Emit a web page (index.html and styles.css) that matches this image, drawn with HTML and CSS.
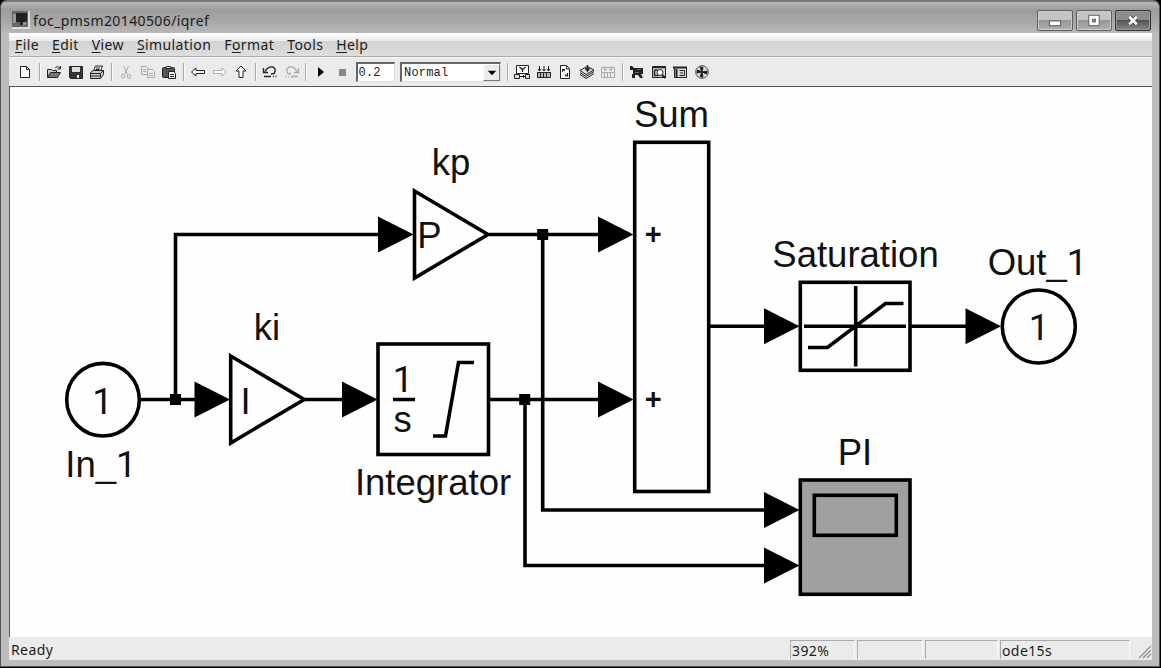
FILE: index.html
```html
<!doctype html>
<html lang="en">

<head>
    <meta charset="UTF-8" />
    <meta name="viewport" content="width=device-width, initial-scale=1.0" />
    <title>foc_pmsm20140506/iqref</title>
    <link rel="stylesheet" href="styles.css">
</head>

<body>
    <div class="window">
        <header class="titlebar">
            <svg class="app-icon" viewBox="0 0 18 18">
                <rect width="18" height="18" fill="#ddd" />
                <rect width="16" height="16" fill="#666" />
                <path d="M4 2h11v9h-3v3H8v-3H4z" fill="#222" />
                <path d="M1 3h3v9H1zM11 11l4 1-4 3z" fill="#999" />
            </svg>
            <h1>foc_pmsm20140506/iqref</h1>
            <div class="window-buttons">
                <button type="button" aria-label="Minimize">
                    <svg viewBox="0 0 36 20"><rect x="12" y="10.500" width="12" height="5" fill="#fff" stroke="#555" /></svg>
                </button>
                <button type="button" aria-label="Maximize">
                    <svg viewBox="0 0 36 20"><path d="M12.500 4.500h11v11h-11zM16.500 8.500h3v3h-3z" fill="#fff" fill-rule="evenodd" stroke="#555" /></svg>
                </button>
                <button type="button" class="close" aria-label="Close">
                    <svg viewBox="0 0 36 20"><path d="M14 6l8 8M22 6l-8 8" stroke="#444" stroke-width="4.500" /><path d="M14 6l8 8M22 6l-8 8" stroke="#fff" stroke-width="2.800" /></svg>
                </button>
            </div>
        </header>

        <nav class="menubar">
            <span><u>F</u>ile</span>
            <span><u>E</u>dit</span>
            <span><u>V</u>iew</span>
            <span><u>S</u>imulation</span>
            <span>F<u>o</u>rmat</span>
            <span><u>T</u>ools</span>
            <span><u>H</u>elp</span>
        </nav>

        <div class="toolbar">
            <svg class="icon" viewBox="0 0 16 16"><path d="M3.500 2.500h6l3 3v8h-9z" fill="#fff" /><path d="M9.500 2.500v3h3" /></svg>
            <i class="sep"></i>
            <!-- open, save, print -->
            <svg class="icon" viewBox="0 0 16 16"><path d="M1.500 13V5.500h4l1 1h4V9" fill="#ccc" /><path d="M1.500 13.500l3-5h10l-3 5z" fill="#777" /><path d="M9 4q3-3 5 0m.5-2v3h-3" /></svg>
            <svg class="icon" viewBox="0 0 16 16"><path d="M1.500 2.500h13v12h-12l-1-1z" fill="#333" /><path d="M4 3h8v5H4z" fill="#ddd" stroke="none" /><path d="M9 11h2v3H9z" fill="#eee" stroke="none" /></svg>
            <svg class="icon" viewBox="0 0 16 16"><path d="M4.500 7l2-5h7l-2 5" fill="#fff" /><path d="M7 4h4M6.500 5.500h4" /><path d="M1.500 8.500l3-2h10v4l-3 4h-10z" fill="#ccc" /><path d="M2 9.500h9.500l2.500-3M2 12h9M11.500 9.500v4" /></svg>
            <i class="sep"></i>
            <svg class="icon dim" viewBox="0 0 16 16"><path d="M5.500 2l4 8.500M10.500 2l-4 8.500" /><circle cx="5" cy="12.300" r="1.800" /><circle cx="11" cy="12.300" r="1.800" /></svg>
            <svg class="icon dim" viewBox="0 0 16 16"><path d="M1.500 2.500h5l2 2v6h-7z" /><path d="M7.500 5.500h5l2 2v6h-7z" fill="#eee" /><path d="M3 5.500h3M3 7.500h3M9 9.500h4M9 11.500h4" /></svg>
            <svg class="icon" viewBox="0 0 16 16"><rect x="1.500" y="3.500" width="12" height="10" rx="1" fill="#555" /><path d="M4.500 4.500l1-2h4l1 2z" fill="#ddd" /><path d="M7.500 7.500h5l2 2v5h-7z" fill="#fff" /><path d="M9 10.500h4M9 12.500h4" /></svg>
            <i class="sep"></i>
            <svg class="icon" viewBox="0 0 16 16"><path d="M1.500 8l4.500-4v2.500h8.500v3H6V12z" fill="#fff" /></svg>
            <svg class="icon dim" viewBox="0 0 16 16"><path d="M14.500 8L10 4v2.500H1.500v3H10V12z" fill="#fff" /></svg>
            <svg class="icon" viewBox="0 0 16 16"><path d="M8 2l5 5h-3v6.500H6V7H3z" fill="#fff" /></svg>
            <i class="sep"></i>
            <svg class="icon" viewBox="0 0 16 16"><path d="M3 7.500Q6 2 11 3q4 2.500 1 6.500l-3 .5M1.500 4v4.500H6" stroke-width="1.400" /><path d="M2 12.500h7M11 12.500h1M13.500 12.500h1" stroke-width="1.600" /></svg>
            <svg class="icon dim" viewBox="0 0 16 16"><path d="M13 7.500Q10 2 5 3q-4 2.500-1 6.500l3 .5M14.500 4v4.500H10" stroke-width="1.400" /><path d="M14 12.500H7M5 12.500H4M2.500 12.500h-1" stroke-width="1.600" /></svg>
            <i class="sep"></i>
            <svg class="icon" viewBox="0 0 16 16"><path d="M5 3l6 5-6 5z" fill="#000" stroke="none" /></svg>
            <svg class="icon" viewBox="0 0 16 16"><path d="M5 5h7v7H5z" fill="#888" stroke="none" /></svg>
            <span class="field">0.2</span>
            <span class="field select">Normal
                <span class="arrow"><svg viewBox="0 0 16 16"><path d="M4 6h9l-4.500 5z" /></svg></span>
            </span>
            <i class="sep"></i>
            <svg class="icon" viewBox="0 0 16 16"><path d="M2.500 1.500h12v8h-12z" fill="#fff" /><path d="M5.500 3l3 2.500 3-2.500M8.500 5.500V8" stroke-width="1.400" /><path d="M.5 10.500h5v4h-5zM11.500 10.500h4v4h-4z" fill="#ddd" /><path d="M6 12.500h5M9 11l1.500 1.500L9 14" /></svg>
            <svg class="icon" viewBox="0 0 16 16"><path d="M1.500 8.500h13v5h-13z" fill="#bbb" /><path d="M1 8.500h14M4.500 9v4M7.500 9v4M10.500 9v4M3.500 2v5M8 2v5M12.500 2v5M2 5l1.500 2L5 5M6.500 5L8 7l1.500-2M11 5l1.500 2L14 5" /></svg>
            <svg class="icon" viewBox="0 0 16 16"><path d="M3.500 1.500h6l3 3v10h-9z" fill="#fff" /><path d="M9.500 2v3h3M5.500 8V5.500H8M5.500 5.500L8 7M10.500 9v3H8M10.500 12L8 10" /></svg>
            <svg class="icon" viewBox="0 0 16 16"><path d="M1 10.500l6 4 8-5M1 8.500l6 4 8-5" /><path d="M1 6.500l7-4 7 3.500-8 4.500z" fill="#ddd" /><path d="M8.500 1v4M7 5l1.500 2L10 5z" fill="#000" stroke-width="1.400" /></svg>
            <svg class="icon dim" viewBox="0 0 16 16"><path d="M1.500 8.500h13v5h-13zM4.500 9v4M7.500 9v4M10.500 9v4M1.500 8V3.500h13V8M5 2v5M11 2v5M3.500 5.500h3M9.500 5.500h3" /></svg>
            <i class="sep"></i>
            <svg class="icon" viewBox="0 0 16 16"><path d="M1 2h2l2 2h9v6h-2l2 4h-3l-2-3H6v3H3v-4h1V6H1z" fill="#222" stroke="none" /><path d="M8 5.500h4M6 8.500h4" stroke="#666" /></svg>
            <svg class="icon" viewBox="0 0 16 16"><path d="M1.500 2.500h13v11h-13z" fill="#ddd" /><path d="M1.500 3.500h13M3.500 6v5.500h4M3.500 6h3" stroke-width="1.600" /><circle cx="9" cy="8.500" r="3" fill="#fff" /><path d="M11 11l3.500 3" stroke-width="2" /></svg>
            <svg class="icon" viewBox="0 0 16 16"><path d="M2.500 3.500h12v10h-12z" fill="#ddd" /><path d="M1 3.500h14M4.500 5v8" stroke-width="2" /><path d="M7.500 6.500h5v5h-5M8 9h3" /></svg>
            <svg class="icon" viewBox="0 0 16 16"><circle cx="8" cy="8" r="6.300" fill="#ddd" stroke="#444" /><path d="M8 8L6 3l3 .5zM8 8l5-1-.5 3zM8 8l1 5-3-.5zM8 8l-5 1 .5-3z" fill="#111" /></svg>
        </div>

        <main class="canvas">
            <svg viewBox="10 87 1142 549">
                <defs>
                    <!-- arrowhead with its tip at the origin -->
                    <path id="head" class="solid" d="M0 0l-35.500-18v36z" />
                    <rect id="node" class="solid" x="-5.500" y="-5.500" width="11" height="11" />
                </defs>

                <!-- signal lines -->
                <g class="line">
                    <path d="M140 399.500h60M175.500 399.500v-165H380" />
                    <path d="M304 399.500h40M489 399.500h112M489 234.500h112" />
                    <path d="M542.700 234.500V510H766M525 399.500v166h241" />
                    <path d="M709 326.300h57M910 326.300h58" />
                </g>
                <use href="#head" x="230" y="399.500" />
                <use href="#head" x="413.500" y="234.500" />
                <use href="#head" x="377.500" y="399.500" />
                <use href="#head" x="633.500" y="234.500" />
                <use href="#head" x="633.500" y="399.500" />
                <use href="#head" x="799.500" y="326.300" />
                <use href="#head" x="1001" y="326.300" />
                <use href="#head" x="799.500" y="510" />
                <use href="#head" x="799.500" y="565.500" />
                <use href="#node" x="175.500" y="399.500" />
                <use href="#node" x="542.700" y="234.500" />
                <use href="#node" x="524.700" y="399.500" />

                <!-- blocks -->
                <g class="block">
                    <circle cx="103" cy="399.700" r="36.300" />
                    <path d="M414.500 191l73.500 43.500-73.500 43.500z" />
                    <path d="M230.700 356l73.500 43.500-73.500 43.500z" />
                    <rect x="378" y="344" width="110.500" height="110.500" />
                    <path d="M393 399.500h22M433 436h12.500l13-73.500H474" />
                    <rect x="634.700" y="142.300" width="74" height="349.200" />
                    <rect x="800.300" y="282.300" width="109.700" height="88" />
                    <path d="M855.700 286v80.500M804 326.300h102M808 347.500h19.500l58-44h18" />
                    <circle cx="1038.800" cy="326.500" r="36.500" />
                    <rect class="scope" x="800.300" y="480" width="109.700" height="114.300" />
                    <rect class="scope" x="814.300" y="495.300" width="82" height="40" />
                </g>

                <g class="label">
                    <text class="digit" x="102.500" y="413.500">1</text>
                    <text x="101" y="476.500">In_<tspan class="digit">1</tspan></text>
                    <text x="267" y="340">ki</text>
                    <text x="245.500" y="413.500">I</text>
                    <text x="451" y="175">kp</text>
                    <text x="429.500" y="248">P</text>
                    <text class="digit" x="403" y="392">1</text>
                    <text x="402.500" y="431.500">s</text>
                    <text x="433" y="495">Integrator</text>
                    <text x="671.500" y="127">Sum</text>
                    <text x="855.500" y="267">Saturation</text>
                    <text x="1037.500" y="274.500">Out_<tspan class="digit">1</tspan></text>
                    <text class="digit" x="1039" y="340">1</text>
                    <text x="855" y="465">PI</text>
                    <text class="sign" x="653.300" y="243.500">+</text>
                    <text class="sign" x="653.300" y="408.700">+</text>
                </g>
            </svg>
        </main>

        <footer class="statusbar">
            <span class="message">Ready</span>
            <span class="panel zoom">392%</span>
            <span class="panel"></span>
            <span class="panel wide"></span>
            <span class="panel solver">ode15s</span>
            <svg class="grip" viewBox="0 0 14 14"><path d="M1 13L13 1M5 13l8-8M9 13l4-4" /></svg>
        </footer>
    </div>
</body>

</html>
```
FILE: styles.css
```css
:root {
    --face: #ebebeb;
    --frame: #bcbcbc;
    --ink: #1c1c1c;
}

* {
    margin: 0;
    padding: 0;
    box-sizing: border-box;
}

body {
    height: 668px;
    overflow: hidden;
    background: #000;
    color: var(--ink);
    font-family: "Noto Sans", "Open Sans", sans-serif;
    font-size: 14px;
    letter-spacing: 0.4px;
}

.window {
    display: flex;
    flex-direction: column;
    width: 1160px;
    height: 667px;
    padding: 0 7px 6px 8px;
    background: var(--frame);
    border: 1px solid #555;
    border-top: 2px solid #777;
    border-radius: 7px 7px 0 0;
}

.titlebar {
    display: flex;
    height: 31px;
    margin: 0 -7px 0 -8px;
    padding: 0 8px 0 11px;
    background: linear-gradient(#b8b8b8, #9c9c9c 25%, #aaa 70%, #b8b8b8);
    border-radius: 5px 5px 0 0;
}

.app-icon {
    width: 18px;
    height: 18px;
    margin-top: 9px;
}

h1 {
    margin: 9px auto 0 3px;
    font-size: 14px;
    font-weight: 400;
    line-height: 19px;
}

.window-buttons {
    display: flex;
    gap: 3px;
    margin-top: 8px;
}

.window-buttons button {
    width: 36px;
    height: 21px;
    background: linear-gradient(#c4c4c4 50%, #969696 50%, #b0b0b0);
    border: 1px solid #606060;
    border-radius: 2px;
    box-shadow: inset 0 0 0 1px #ccc;
}

.window-buttons svg {
    display: block;
    width: 34px;
    height: 19px;
}

.window-buttons .close {
    background: linear-gradient(#8c8c8c 50%, #555 50%, #888);
    border-color: #333;
    box-shadow: inset 0 0 0 1px #999;
}

.menubar {
    display: flex;
    gap: 13px;
    height: 24px;
    padding-left: 6px;
    background: linear-gradient(#fff, #ececec 35%, #d2d2d2 36%, #dedede);
    border-bottom: 1px solid #aaa;
    line-height: 24px;
}

.menubar u {
    text-underline-offset: 2px;
}

.toolbar {
    display: flex;
    align-items: center;
    gap: 5.5px;
    height: 29px;
    padding-left: 8px;
    background: var(--face);
    border-top: 1px solid #f8f8f8;
}

.icon {
    flex: none;
    width: 16px;
    height: 16px;
    fill: none;
    stroke: #222;
}

.icon.dim {
    stroke: #aaa;
}

.sep {
    width: 2px;
    height: 18px;
    border-left: 1px solid #aaa;
    border-right: 1px solid #fafafa;
}

.field {
    width: 39px;
    height: 20px;
    padding-left: 1px;
    background: #fff;
    border: 1px solid #ddd;
    border-top: 2px solid #666;
    border-left: 2px solid #666;
    font-family: "Liberation Mono", monospace;
    font-size: 12px;
    letter-spacing: 0.2px;
    line-height: 18px;
}

.select {
    display: flex;
    justify-content: space-between;
    width: 101px;
    padding-left: 2px;
}

.arrow {
    width: 17px;
    height: 17px;
    background: var(--face);
    border: 1px solid #777;
    border-top-color: #fff;
    border-left-color: #fff;
}

.arrow svg {
    display: block;
}

.canvas {
    flex: 1;
    min-height: 0;
    background: #fefefe;
    border-top: 1px solid #555;
    border-left: 1px solid #555;
}

.canvas svg {
    display: block;
    width: 1142px;
    height: 549px;
}

.solid {
    fill: #000;
}

.line,
.block {
    fill: none;
    stroke: #000;
    stroke-width: 3.600;
}

.scope {
    fill: #a0a0a0;
}

.label {
    fill: #111;
    font-family: "Liberation Sans", sans-serif;
    font-size: 36.500px;
    letter-spacing: 0;
    text-anchor: middle;
}

/* plain "1" without a foot */
.digit {
    font-family: Roboto, sans-serif;
}

.sign {
    font-size: 29px;
    font-weight: 700;
}

.statusbar {
    display: flex;
    gap: 2px;
    height: 23px;
    padding-top: 3px;
    background: var(--face);
    line-height: 20px;
}

.message {
    flex: 1;
    padding-left: 2px;
}

.panel {
    width: 66px;
    height: 19px;
    padding-left: 1px;
    border-top: 1px solid #aaa;
    border-left: 1px solid #aaa;
    border-right: 1px solid #fafafa;
}

.zoom {
    width: 65px;
}

.wide {
    width: 73px;
}

.solver {
    width: 130px;
}

.grip {
    width: 14px;
    height: 14px;
    margin: 5px 0 0 6px;
    stroke: #999;
    stroke-width: 1.500;
}
```
